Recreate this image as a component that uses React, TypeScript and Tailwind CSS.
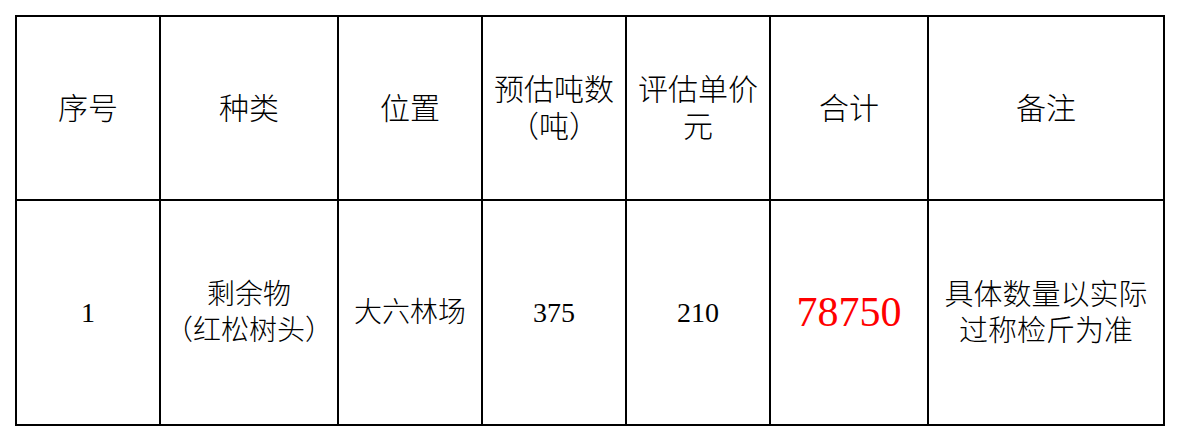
function Paren({ open }: { open: boolean }) {
  return <span className="inline-block w-[1em] text-center">{open ? "（" : "）"}</span>;
}

export default function App() {
  const font = { fontFamily: '"Liberation Serif", "Noto Sans CJK SC", serif' };
  const cell =
    "border-2 border-black text-center align-middle text-[30px] leading-[37px] text-black font-light px-0 whitespace-nowrap";
  return (
    <div className="w-[1180px] h-[440px] bg-white pt-[15px] pl-[15px]" style={font}>
      <table className="table-fixed border-collapse w-[1150px]">
        <colgroup>
          <col className="w-[144px]" />
          <col className="w-[178px]" />
          <col className="w-[144px]" />
          <col className="w-[144px]" />
          <col className="w-[144px]" />
          <col className="w-[158px]" />
          <col className="w-[236px]" />
        </colgroup>
        <tbody>
          <tr className="h-[184px]">
            <th className={cell}>序号</th>
            <th className={cell}>种类</th>
            <th className={cell}>位置</th>
            <th className={cell}>
              预估吨数
              <br />
              <Paren open />吨<Paren open={false} />
            </th>
            <th className={cell}>
              评估单价
              <br />元
            </th>
            <th className={cell}>合计</th>
            <th className={cell}>备注</th>
          </tr>
          <tr className="h-[225px]">
            <td className={`${cell} !text-[28px] !font-normal`}>1</td>
            <td className={`${cell} !text-[28px] !leading-[36px]`}>
              剩余物
              <br />
              <Paren open />红松树头<Paren open={false} />
            </td>
            <td className={`${cell} !text-[28px]`}>大六林场</td>
            <td className={`${cell} !text-[28px] !font-normal`}>375</td>
            <td className={`${cell} !text-[28px] !font-normal`}>210</td>
            <td className={`${cell} !text-[42px] !font-normal !text-[#ff0000]`}>78750</td>
            <td className={`${cell} !text-[29px] !leading-[36px]`}>
              具体数量以实际
              <br />
              过称检斤为准
            </td>
          </tr>
        </tbody>
      </table>
    </div>
  );
}
